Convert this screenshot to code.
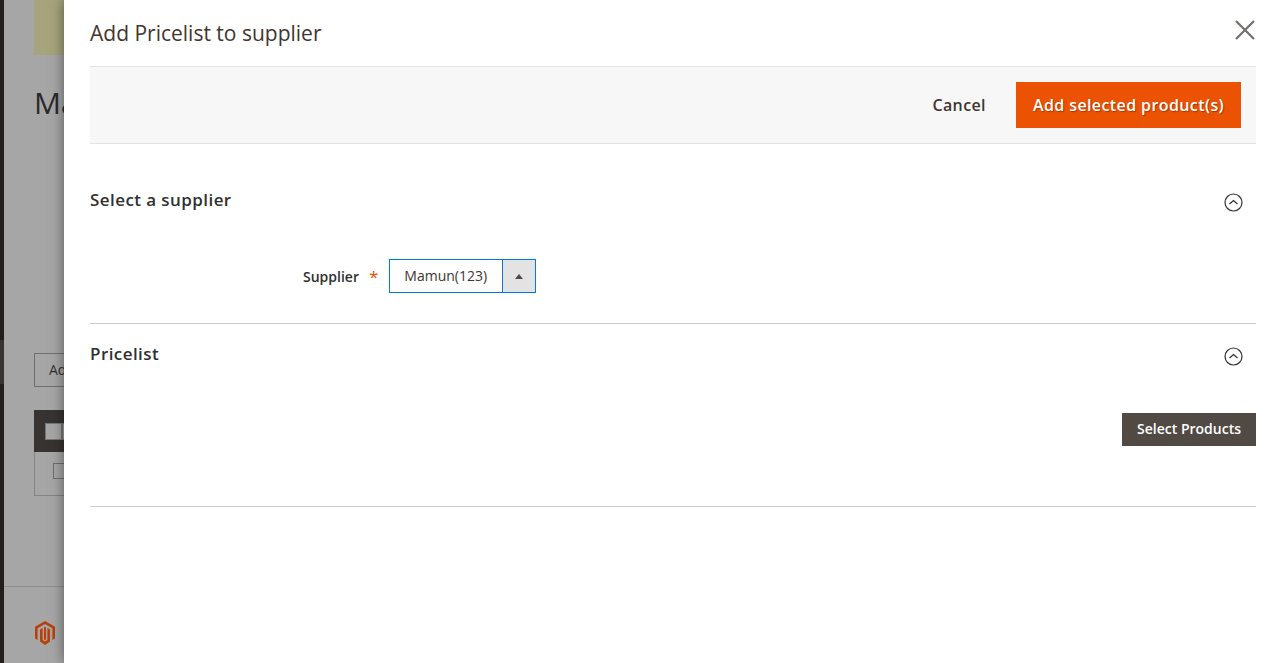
<script>
  const sections = [
    { title: 'Select a supplier' },
    { title: 'Pricelist' }
  ];
</script>

<div class="page">
  <div class="rail"><div class="rail-top"></div><div class="rail-mid"></div></div>
  <div class="under">
    <div class="notice"></div>
    <h1 class="page-title">Manage</h1>
    <div class="add-btn">Add</div>
    <div class="grid-table">
      <div class="grid-head"><span class="head-box"></span><span class="head-box"></span></div>
      <div class="grid-row"><span class="row-box"></span></div>
    </div>
    <div class="footer">
      <svg class="logo" width="20" height="24" viewBox="0 0 20 24">
        <path fill="#b8400a" d="M10 0 L20 5.8 V17.6 L17.4 19.1 V7.3 L10 3 L2.6 7.3 V19.1 L0 17.6 V5.8 Z"/>
        <path fill="#b8400a" d="M5 8.6 L7.6 7.1 V19 L10 20.4 L12.4 19 V7.1 L15 8.6 V20.4 L10 24 L5 20.4 Z"/>
        <path fill="#b8400a" d="M9 6.4 L10 5.8 L11 6.4 V18.6 L10 19.2 L9 18.6 Z"/>
      </svg>
    </div>
  </div>

  <aside class="modal">
    <header class="modal-head">
      <h2>Add Pricelist to supplier</h2>
      <button class="close" aria-label="Close">
        <svg width="20" height="20" viewBox="0 0 20 20"><path d="M1 1 L19 19 M19 1 L1 19" stroke="#736e6b" stroke-width="2.2" fill="none"/></svg>
      </button>
    </header>

    <div class="actions">
      <button class="cancel">Cancel</button>
      <button class="primary">Add selected product(s)</button>
    </div>

    <section class="block first">
      <div class="block-head">
        <h3>{sections[0].title}</h3>
        <svg class="toggle" width="19" height="19" viewBox="0 0 19 19"><circle cx="9.5" cy="9.5" r="8.5" stroke="#303030" stroke-width="1.2" fill="none"/><path d="M5.5 11 L9.5 7.5 L13.5 11" stroke="#303030" stroke-width="1.2" fill="none"/></svg>
      </div>
      <div class="field">
        <label for="supplier">Supplier</label>
        <span class="req">*</span>
        <div class="select" id="supplier">
          <span class="value">Mamun(123)</span>
          <span class="arrow"><i></i></span>
        </div>
      </div>
    </section>

    <section class="block second">
      <div class="block-head">
        <h3>{sections[1].title}</h3>
        <svg class="toggle" width="19" height="19" viewBox="0 0 19 19"><circle cx="9.5" cy="9.5" r="8.5" stroke="#303030" stroke-width="1.2" fill="none"/><path d="M5.5 11 L9.5 7.5 L13.5 11" stroke="#303030" stroke-width="1.2" fill="none"/></svg>
      </div>
      <div class="select-row">
        <button class="dark">Select Products</button>
      </div>
    </section>
  </aside>
</div>

<style>
  :global(body) { margin: 0; font-family: "Open Sans", sans-serif; }
  .page { position: relative; height: 663px; width: 1282px; overflow: hidden; background: #a6a6a6; display: flex; }
  .rail { width: 4px; background: #211e1c; flex-shrink: 0; }
  .rail-top { height: 340px; }
  .rail-mid { height: 44px; background: #373330; }
  .under { flex: 1; position: relative; display: flex; flex-direction: column; padding-left: 30px; color: #2a2523; }
  .notice { height: 55px; width: 200px; background: #a5a47c; }
  .page-title { margin: 29px 0 0; font-size: 30px; font-weight: 400; line-height: 38px; height: 38px; color: #2a2a2a; }
  .add-btn { margin-top: 231px; width: 200px; height: 32px; border: 1px solid #6f6f6f; line-height: 32px; font-size: 14px; padding-left: 14px; color: #333; box-sizing: content-box; }
  .grid-table { margin-top: 23px; width: 200px; }
  .grid-head { height: 42px; background: #373330; display: flex; align-items: center; padding-left: 11px; }
  .head-box { width: 15px; height: 15px; background: #a6a6a6; border: 1px solid #777; }
  .grid-row { height: 44px; border: 1px solid #848484; border-top: 0; padding: 11px 0 0 18px; box-sizing: border-box; }
  .row-box { display: block; width: 16px; height: 14px; border: 1px solid #6f6f6f; }
  .footer { position: absolute; left: 0; right: 0; top: 586px; height: 77px; border-top: 1px solid #8f8f8f; padding: 34px 0 0 31px; box-sizing: border-box; }
  .logo { display: block; }

  .modal { position: absolute; left: 64px; top: 0; right: 0; bottom: 0; background: #fff; padding: 0 26px; box-shadow: 0 0 12px rgba(0,0,0,.5); color: #303030; }
  .modal-head { height: 66px; display: flex; align-items: center; justify-content: space-between; }
  .modal-head h2 { margin: 0; font-size: 21px; font-weight: 400; color: #41362f; }
  .close { position: absolute; top: 20px; right: 27px; padding: 0; border: 0; background: none; height: 20px; }
  .close svg { display: block; }
  .actions { height: 78px; box-sizing: border-box; background: #f7f7f7; border-top: 1px solid #e3e3e3; border-bottom: 1px solid #e3e3e3; display: flex; align-items: center; justify-content: flex-end; padding-right: 15px; }
  button { font-family: inherit; }
  .cancel { border: 0; background: none; font-size: 16px; font-weight: 600; color: #41362f; margin-right: 30px; padding: 0; letter-spacing: .025em; }
  .primary { height: 46px; width: 225px; border: 0; background: #eb5202; color: #fff; font-size: 16px; font-weight: 600; padding: 0; letter-spacing: .025em; text-shadow: 1px 1px 1px rgba(0,0,0,.3); }
  .block { border-bottom: 1px solid #cccccc; }
  .first { height: 180px; box-sizing: border-box; padding-top: 43px; }
  .second { height: 183px; box-sizing: border-box; padding-top: 17px; }
  .block-head { display: flex; justify-content: space-between; align-items: center; height: 24px; padding-right: 13px; }
  .block-head h3 { margin: 0; font-size: 17px; font-weight: 600; color: #303030; letter-spacing: .025em; }
  .toggle { display: block; position: relative; top: 3px; }
  .field { display: flex; align-items: center; margin-top: 48px; padding-left: 213px; height: 34px; }
  .field label { font-size: 14px; font-weight: 600; color: #303030; }
  .req { color: #eb5202; font-size: 17px; margin: 0 11px 0 10px; line-height: 1; }
  .select { width: 147px; height: 34px; box-sizing: border-box; border: 1px solid #007bdb; display: flex; }
  .value { flex: 1; font-size: 14px; line-height: 32px; padding-left: 14px; color: #41362f; }
  .arrow { width: 32px; background: #e3e3e3; border-left: 1px solid #007bdb; display: flex; align-items: center; justify-content: center; }
  .arrow i { width: 0; height: 0; border-left: 4.5px solid transparent; border-right: 4.5px solid transparent; border-bottom: 5px solid #514943; }
  .select-row { display: flex; justify-content: flex-end; margin-top: 48px; }
  .dark { width: 134px; height: 33px; border: 0; background: #514943; color: #fff; font-size: 14px; font-weight: 600; padding: 0 0 2px; }
</style>
